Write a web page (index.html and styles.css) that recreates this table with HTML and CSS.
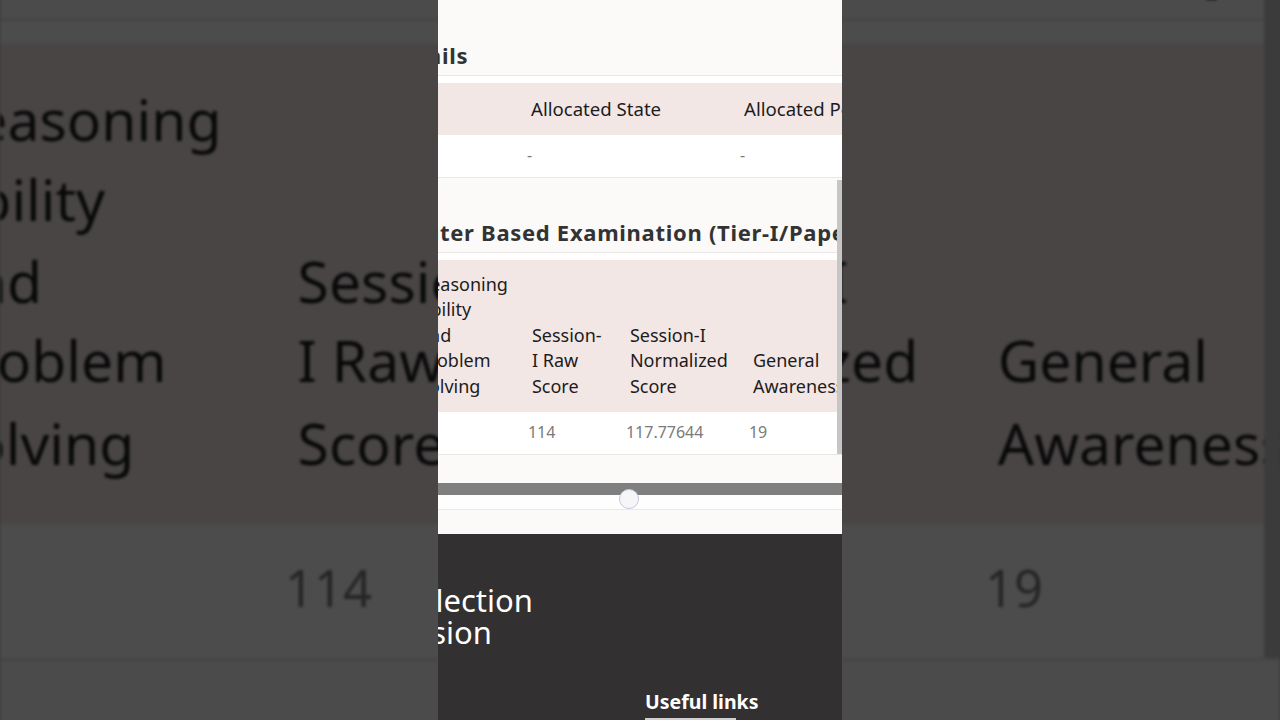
FILE: index.html
```html
<!DOCTYPE html>
<html lang="en">
<head>
<meta charset="utf-8">
<title>Result Details</title>
<link rel="stylesheet" href="styles.css">
</head>
<body>
<div class="stage">
  <div class="backdrop" aria-hidden="true">
    <div class="phone phone-copy">
      <section class="card card-alloc">
        <div class="scroller scroller-alloc">
          <h2 class="card-title">Allocation Details</h2>
          <div class="table-wrap">
            <table class="grid grid-alloc">
              <thead><tr><th class="c-roll">Roll Number</th><th class="c-state">Allocated State</th><th class="c-post">Allocated Post</th></tr></thead>
              <tbody><tr><td>&nbsp;</td><td>-</td><td>-</td></tr></tbody>
            </table>
          </div>
        </div>
      </section>
      <section class="card card-cbe">
        <div class="scroller scroller-cbe">
          <h2 class="card-title">Computer Based Examination (Tier-I/Paper-I)</h2>
          <div class="table-wrap">
            <table class="grid grid-cbe">
              <thead><tr><th class="c-no">#</th><th class="c-rea">Reasoning Ability and Problem Solving</th><th class="c-raw">Session-I Raw Score</th><th class="c-norm">Session-I Normalized Score</th><th class="c-ga">General Awareness</th></tr></thead>
              <tbody><tr><td>&nbsp;</td><td>&nbsp;</td><td>114</td><td>117.77644</td><td>19</td></tr></tbody>
            </table>
          </div>
        </div>
        <div class="vscroll"></div>
      </section>
      <section class="card card-range">
        <div class="track"></div>
        <div class="track-under"></div>
        <div class="thumb"></div>
      </section>
      <footer class="footer">
        <div class="footer-inner">
          <p class="footer-brand"><span class="brand-line">Staff Selection</span><span class="brand-line brand-line-2">Commission</span></p>
          <h3 class="footer-links">Useful links</h3>
        </div>
      </footer>
    </div>
  </div>

  <div class="phone">
    <section class="card card-alloc">
      <div class="scroller scroller-alloc">
        <h2 class="card-title">Allocation Details</h2>
        <div class="table-wrap">
          <table class="grid grid-alloc">
            <thead><tr><th class="c-roll">Roll Number</th><th class="c-state">Allocated State</th><th class="c-post">Allocated Post</th></tr></thead>
            <tbody><tr><td>&nbsp;</td><td>-</td><td>-</td></tr></tbody>
          </table>
        </div>
      </div>
    </section>
    <section class="card card-cbe">
      <div class="scroller scroller-cbe">
        <h2 class="card-title">Computer Based Examination (Tier-I/Paper-I)</h2>
        <div class="table-wrap">
          <table class="grid grid-cbe">
            <thead><tr><th class="c-no">#</th><th class="c-rea">Reasoning Ability and Problem Solving</th><th class="c-raw">Session-I Raw Score</th><th class="c-norm">Session-I Normalized Score</th><th class="c-ga">General Awareness</th></tr></thead>
            <tbody><tr><td>&nbsp;</td><td>&nbsp;</td><td>114</td><td>117.77644</td><td>19</td></tr></tbody>
          </table>
        </div>
      </div>
      <div class="vscroll"></div>
    </section>
    <section class="card card-range">
      <div class="track"></div>
      <div class="track-under"></div>
      <div class="thumb"></div>
    </section>
    <footer class="footer">
      <div class="footer-inner">
        <p class="footer-brand"><span class="brand-line">Staff Selection</span><span class="brand-line brand-line-2">Commission</span></p>
        <h3 class="footer-links">Useful links</h3>
      </div>
    </footer>
  </div>
</div>
</body>
</html>
```
FILE: styles.css
```css
* { box-sizing: border-box; }
html, body { margin: 0; padding: 0; }
body {
  width: 1280px;
  height: 720px;
  overflow: hidden;
  background: #000;
  font-family: "Noto Sans", "Open Sans", sans-serif;
}
.stage {
  position: relative;
  width: 1280px;
  height: 720px;
  overflow: hidden;
  display: flex;
  justify-content: center;
}
.backdrop {
  position: absolute;
  inset: 0;
  display: flex;
  justify-content: center;
  overflow: hidden;
  background: #3a3838;
}
.phone {
  position: relative;
  z-index: 1;
  flex: none;
  width: 404px;
  height: 720px;
  overflow: hidden;
  background: #fcf9f9;
  display: flex;
  flex-direction: column;
}
.phone-copy {
  z-index: 0;
  transform: scale(3.168);
  transform-origin: 50% 50%;
  filter: brightness(0.3) blur(0.5px);
}

/* cards */
.card {
  position: relative;
  overflow: hidden;
  background: #fcf9f9;
  flex: none;
}
.scroller { width: max-content; }
.scroller-alloc { margin-left: -175px; }
.scroller-cbe { margin-left: -79px; }

.card-alloc { padding-top: 43px; }
.card-cbe { padding-top: 42px; }

.card-title {
  margin: 0;
  padding-bottom: 7px;
  font-size: 22px;
  line-height: 25px;
  font-weight: 700;
  letter-spacing: 0.7px;
  color: #333;
  white-space: nowrap;
}

.table-wrap {
  border-top: 1px solid #ebe7e7;
  padding-top: 7px;
  background: #fff;
}
.grid {
  border-collapse: collapse;
  table-layout: fixed;
  background: #fff;
}
.grid th {
  background: #f3e7e6;
  font-weight: 400;
  font-size: 18px;
  line-height: 25.5px;
  color: #1c1c1c;
  text-align: left;
  vertical-align: bottom;
  padding: 12px 12px 13px 12px;
}
.grid-alloc th {
  padding: 13px 12px 13.5px 12px;
  white-space: nowrap;
  font-size: 18.6px;
}
.grid td {
  font-size: 16px;
  line-height: 25.5px;
  color: #7a7a7a;
  padding: 8px 8px;
  background: #fff;
  border-bottom: 1px solid #ebe7e7;
}
.c-roll { width: 256px; }
.c-state { width: 213px; }
.c-post { width: 200px; }
.c-no { width: 48px; }
.c-rea { width: 107px; }
.c-raw { width: 98px; }
.c-norm { width: 123px; }
.c-ga { width: 150px; }

.vscroll {
  position: absolute;
  right: 0;
  top: 2px;
  bottom: 1px;
  width: 5px;
  background: #c6c6c6;
}

/* range-like scrollbar */
.card-range {
  height: 79px;
  padding-top: 28px;
}
.track {
  height: 12px;
  background: #7f7f7f;
}
.track-under {
  height: 15px;
  background: #fefefe;
  border-bottom: 1px solid #ece8e8;
}
.thumb {
  position: absolute;
  left: 181px;
  top: 34px;
  width: 20px;
  height: 20px;
  border-radius: 50%;
  background: #f6f6f9;
  border: 1.5px solid #c3c8dc;
}

/* footer */
.footer {
  flex: 1;
  background: #323030;
  overflow: hidden;
  padding-top: 50px;
}
.footer-inner {
  margin-left: -112px;
  width: max-content;
}
.footer-brand {
  margin: 0;
  font-size: 31px;
  line-height: 32px;
  color: #fff;
  font-weight: 400;
  white-space: nowrap;
}
.brand-line { display: block; }
.brand-line-2 { margin-left: -14px; }
.footer-links {
  margin: 42px 0 0 319px;
  font-size: 19.5px;
  line-height: 24px;
  font-weight: 700;
  color: #fff;
  display: inline-block;
}
.footer-links::after {
  content: "";
  display: block;
  width: 91px;
  height: 2px;
  margin-top: 4px;
  background: #cfcfcf;
}
```
